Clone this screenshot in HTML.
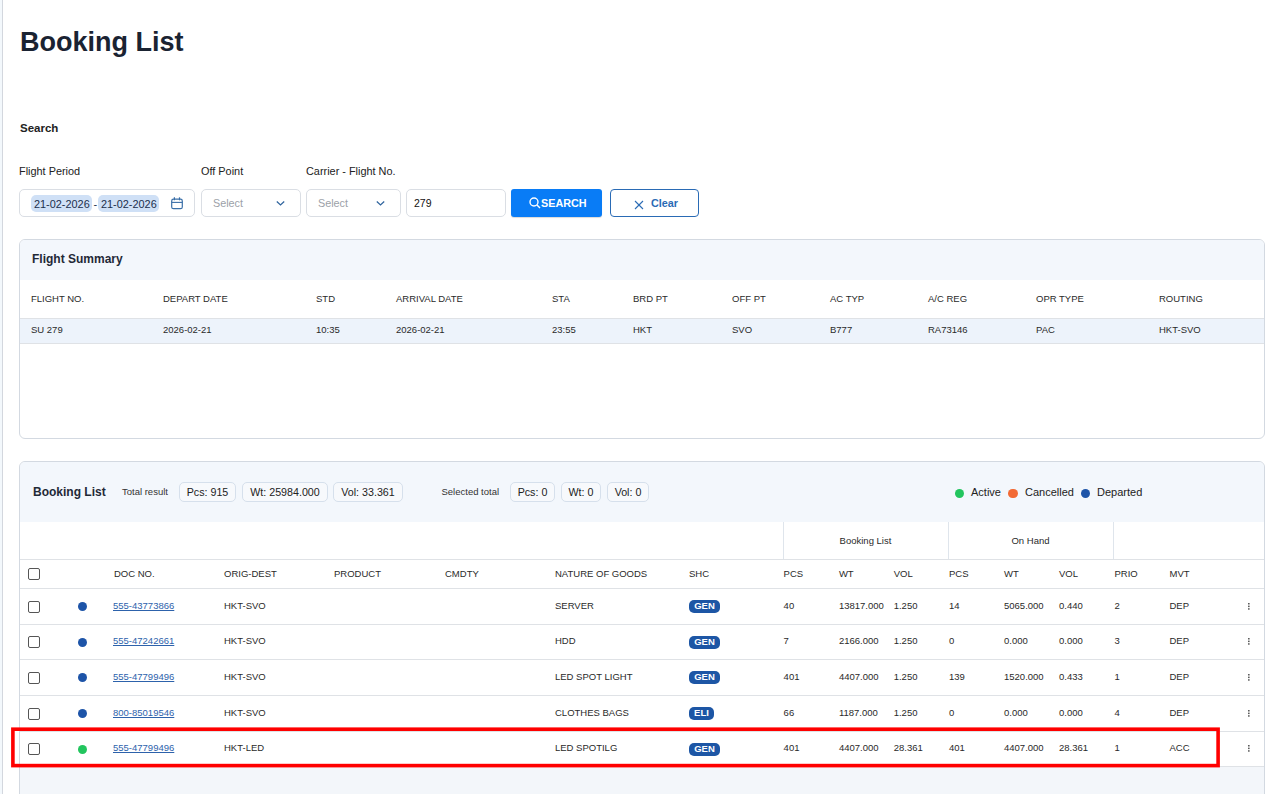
<!DOCTYPE html>
<html><head><meta charset="utf-8">
<style>
*{box-sizing:border-box;margin:0;padding:0}
html,body{width:1270px;height:794px;overflow:hidden;background:#fff;font-family:"Liberation Sans",sans-serif;color:#1f2937}
.a{position:absolute;white-space:nowrap}
#lstrip{position:absolute;left:0;top:0;width:2px;height:794px;background:#f3f8fc}
#lborder{position:absolute;left:2px;top:0;width:1px;height:794px;background:#d3d7de}
h1{position:absolute;left:20px;top:27px;font-size:27px;font-weight:bold;color:#1a2332;letter-spacing:0}
.lbl{font-size:10.9px;color:#222}
.inp{position:absolute;top:189px;height:28px;border:1px solid #dadee4;border-radius:5px;background:#fff}
.chip{position:absolute;top:195px;height:17px;background:#cfe0f6;border-radius:5px}
.dt{font-size:10.9px;color:#1b2f4d}
.sel{font-size:10.8px;color:#9ca1a8}
.card{position:absolute;left:19px;width:1246px;border:1px solid #d3d9e1;border-radius:6px;background:#fff;overflow:hidden}
.chd{position:absolute;left:0;top:0;right:0;background:#f3f7fc}
.th{font-size:9.5px;color:#2a2a2a}
.td{font-size:9.5px;color:#2a2a2a}
.hl{position:absolute;height:1px;background:#dfe2e6}
.vl{position:absolute;width:1px;background:#dfe5ec}
.pill{position:absolute;top:482px;height:20px;border:1px solid #d6e0ec;border-radius:5px;background:#f7f9fc;font-size:10.7px;color:#222;text-align:center;line-height:18px}
.dot{position:absolute;width:9.5px;height:9.5px;border-radius:50%}
.cb{position:absolute;left:28px;width:12px;height:12px;border:1.5px solid #555;border-radius:2px;background:#fff}
.lnk{font-size:9.5px;color:#2d62ab;text-decoration:underline}
.badge{position:absolute;height:13px;border-radius:5px;background:#1d56a5;color:#fff;font-size:9.5px;font-weight:bold;text-align:center;line-height:11.4px}
.keb{position:absolute;left:1247.6px;width:2px;height:7px}
</style></head><body>
<div id="lstrip"></div><div id="lborder"></div>
<h1>Booking List</h1>
<div class="a" style="left:20px;top:122px;font-size:11.5px;font-weight:bold;color:#222">Search</div>

<div class="a lbl" style="left:19px;top:165px">Flight Period</div>
<div class="a lbl" style="left:201px;top:165px">Off Point</div>
<div class="a lbl" style="left:306px;top:165px">Carrier - Flight No.</div>

<div class="inp" style="left:19px;width:176px"></div>
<div class="chip" style="left:31px;width:61px"></div>
<div class="chip" style="left:98px;width:61px"></div>
<div class="a dt" style="left:34px;top:198px">21-02-2026</div>
<div class="a dt" style="left:93.5px;top:198px">-</div>
<div class="a dt" style="left:101px;top:198px">21-02-2026</div>
<svg class="a" style="left:170px;top:197px" width="14" height="14" viewBox="0 0 14 14"><rect x="1.7" y="2.1" width="10.6" height="9.6" rx="1.8" fill="none" stroke="#3a6fa8" stroke-width="1.2"/><line x1="1.7" y1="5.4" x2="12.3" y2="5.4" stroke="#3a6fa8" stroke-width="1.1"/><line x1="4.4" y1="0.3" x2="4.4" y2="3.3" stroke="#3a6fa8" stroke-width="1.2"/><line x1="9.5" y1="0.3" x2="9.5" y2="3.3" stroke="#3a6fa8" stroke-width="1.2"/></svg>

<div class="inp" style="left:201px;width:100px"></div>
<div class="a sel" style="left:213px;top:197px">Select</div>
<svg class="a" style="left:276px;top:200px" width="9" height="7" viewBox="0 0 9 7"><polyline points="0.8,1.5 4.5,5 8.2,1.5" fill="none" stroke="#30659e" stroke-width="1.25"/></svg>

<div class="inp" style="left:306px;width:95px"></div>
<div class="a sel" style="left:318px;top:197px">Select</div>
<svg class="a" style="left:376px;top:200px" width="9" height="7" viewBox="0 0 9 7"><polyline points="0.8,1.5 4.5,5 8.2,1.5" fill="none" stroke="#30659e" stroke-width="1.25"/></svg>

<div class="inp" style="left:406px;width:100px"></div>
<div class="a" style="left:414px;top:197px;font-size:10.5px;color:#111">279</div>

<div class="a" style="left:511px;top:189px;width:91px;height:28px;background:#097cf6;border-radius:3px;box-shadow:0 1px 1px rgba(0,0,0,.15)"></div>
<svg class="a" style="left:529px;top:197px" width="12" height="12" viewBox="0 0 12 12"><circle cx="5" cy="5" r="4" fill="none" stroke="#fff" stroke-width="1.4"/><line x1="8" y1="8" x2="11" y2="11" stroke="#fff" stroke-width="1.4"/></svg>
<div class="a" style="left:541px;top:197px;font-size:10.8px;font-weight:bold;color:#fff">SEARCH</div>

<div class="a" style="left:610px;top:189px;width:89px;height:28px;border:1px solid #2a6bb5;border-radius:4px;background:#fff"></div>
<svg class="a" style="left:634px;top:199.5px" width="10" height="10" viewBox="0 0 10 10"><line x1="1" y1="1" x2="9" y2="9" stroke="#2a6bb5" stroke-width="1.1"/><line x1="9" y1="1" x2="1" y2="9" stroke="#2a6bb5" stroke-width="1.1"/></svg>
<div class="a" style="left:651px;top:197px;font-size:10.8px;font-weight:bold;color:#2a6bb5">Clear</div>

<!-- Flight summary -->
<div class="card" style="top:239px;height:200px">
  <div class="chd" style="height:40px"></div>
</div>
<div class="a" style="left:32px;top:252px;font-size:12px;font-weight:bold;color:#1f2937">Flight Summary</div>
<div class="a" style="left:20px;top:318px;width:1244px;height:25px;background:#edf3fb"></div>
<div class="hl" style="left:20px;top:318px;width:1244px"></div>
<div class="hl" style="left:20px;top:343px;width:1244px"></div>
<div class="a th" style="left:31px;top:293.3px">FLIGHT NO.</div>
<div class="a th" style="left:163px;top:293.3px">DEPART DATE</div>
<div class="a th" style="left:316px;top:293.3px">STD</div>
<div class="a th" style="left:396px;top:293.3px">ARRIVAL DATE</div>
<div class="a th" style="left:552px;top:293.3px">STA</div>
<div class="a th" style="left:633px;top:293.3px">BRD PT</div>
<div class="a th" style="left:732px;top:293.3px">OFF PT</div>
<div class="a th" style="left:830px;top:293.3px">AC TYP</div>
<div class="a th" style="left:928px;top:293.3px">A/C REG</div>
<div class="a th" style="left:1036px;top:293.3px">OPR TYPE</div>
<div class="a th" style="left:1159px;top:293.3px">ROUTING</div>
<div class="a td" style="left:31px;top:324px">SU 279</div>
<div class="a td" style="left:163px;top:324px">2026-02-21</div>
<div class="a td" style="left:316px;top:324px">10:35</div>
<div class="a td" style="left:396px;top:324px">2026-02-21</div>
<div class="a td" style="left:552px;top:324px">23:55</div>
<div class="a td" style="left:633px;top:324px">HKT</div>
<div class="a td" style="left:732px;top:324px">SVO</div>
<div class="a td" style="left:830px;top:324px">B777</div>
<div class="a td" style="left:928px;top:324px">RA73146</div>
<div class="a td" style="left:1036px;top:324px">PAC</div>
<div class="a td" style="left:1159px;top:324px">HKT-SVO</div>

<!-- Booking list -->
<div class="card" style="top:461px;height:340px;background:#f3f6fa">
  <div class="chd" style="height:60px"></div>
  <div style="position:absolute;left:0;top:60px;right:0;height:245px;background:#fff"></div>
</div>
<div class="a" style="left:33px;top:484.7px;font-size:12px;font-weight:bold;color:#1f2937">Booking List</div>
<div class="a" style="left:122px;top:486.2px;font-size:9.5px;color:#333">Total result</div>
<div class="pill" style="left:179px;width:57px">Pcs: 915</div>
<div class="pill" style="left:242px;width:86px">Wt: 25984.000</div>
<div class="pill" style="left:333px;width:70px">Vol: 33.361</div>
<div class="a" style="left:441.5px;top:486.2px;font-size:9.5px;color:#333">Selected total</div>
<div class="pill" style="left:510px;width:45px">Pcs: 0</div>
<div class="pill" style="left:561px;width:40px">Wt: 0</div>
<div class="pill" style="left:607px;width:42px">Vol: 0</div>
<div class="dot" style="left:954.6px;top:488.7px;width:9px;height:9px;background:#22c55e"></div>
<div class="a" style="left:971px;top:486px;font-size:11px;color:#222">Active</div>
<div class="dot" style="left:1008px;top:488.7px;width:9.5px;height:9.5px;background:#f26a35"></div>
<div class="a" style="left:1025px;top:486px;font-size:11px;color:#222">Cancelled</div>
<div class="dot" style="left:1080.7px;top:488.7px;width:9px;height:9px;background:#1d54a8"></div>
<div class="a" style="left:1097px;top:486px;font-size:11px;color:#222">Departed</div>
<div class="hl" style="left:20px;top:559px;width:1244px"></div>
<div class="hl" style="left:20px;top:588px;width:1244px"></div>
<div class="vl" style="left:783px;top:522px;height:37px"></div>
<div class="vl" style="left:948px;top:522px;height:37px"></div>
<div class="vl" style="left:1113px;top:522px;height:37px"></div>
<div class="a th" style="left:783px;width:165px;top:535px;text-align:center">Booking List</div>
<div class="a th" style="left:948px;width:165px;top:535px;text-align:center">On Hand</div>
<div class="cb" style="top:568px"></div>
<div class="a th" style="left:114px;top:568.3px">DOC NO.</div>
<div class="a th" style="left:224px;top:568.3px">ORIG-DEST</div>
<div class="a th" style="left:334px;top:568.3px">PRODUCT</div>
<div class="a th" style="left:445px;top:568.3px">CMDTY</div>
<div class="a th" style="left:555px;top:568.3px">NATURE OF GOODS</div>
<div class="a th" style="left:689px;top:568.3px">SHC</div>
<div class="a th" style="left:783.6px;top:568.3px">PCS</div>
<div class="a th" style="left:838.9px;top:568.3px">WT</div>
<div class="a th" style="left:893.7px;top:568.3px">VOL</div>
<div class="a th" style="left:949px;top:568.3px">PCS</div>
<div class="a th" style="left:1004px;top:568.3px">WT</div>
<div class="a th" style="left:1059px;top:568.3px">VOL</div>
<div class="a th" style="left:1114.5px;top:568.3px">PRIO</div>
<div class="a th" style="left:1169.5px;top:568.3px">MVT</div>
<div class="hl" style="left:20px;top:624px;width:1244px"></div>
<div class="cb" style="top:600.5px"></div>
<div class="dot" style="left:78px;top:602.0px;width:9px;height:9px;background:#1d54a8"></div>
<div class="a lnk" style="left:113px;top:600.0px">555-43773866</div>
<div class="a td" style="left:224px;top:600.0px">HKT-SVO</div>
<div class="a td" style="left:555px;top:600.0px">SERVER</div>
<div class="badge" style="left:689px;top:600.0px;width:31px">GEN</div>
<div class="a td" style="left:783.6px;top:600.0px">40</div>
<div class="a td" style="left:838.9px;top:600.0px">13817.000</div>
<div class="a td" style="left:893.7px;top:600.0px">1.250</div>
<div class="a td" style="left:949px;top:600.0px">14</div>
<div class="a td" style="left:1004px;top:600.0px">5065.000</div>
<div class="a td" style="left:1059px;top:600.0px">0.440</div>
<div class="a td" style="left:1114.5px;top:600.0px">2</div>
<div class="a td" style="left:1169.5px;top:600.0px">DEP</div>
<svg class="keb" style="top:602.7px" width="2" height="7" viewBox="0 0 2 7"><rect x="0.2" y="0" width="1.3" height="1.5" fill="#333"/><rect x="0.2" y="2.6" width="1.3" height="1.5" fill="#333"/><rect x="0.2" y="5.2" width="1.3" height="1.5" fill="#333"/></svg>
<div class="hl" style="left:20px;top:659px;width:1244px"></div>
<div class="cb" style="top:636.0px"></div>
<div class="dot" style="left:78px;top:637.5px;width:9px;height:9px;background:#1d54a8"></div>
<div class="a lnk" style="left:113px;top:635.0px">555-47242661</div>
<div class="a td" style="left:224px;top:635.0px">HKT-SVO</div>
<div class="a td" style="left:555px;top:635.0px">HDD</div>
<div class="badge" style="left:689px;top:635.5px;width:31px">GEN</div>
<div class="a td" style="left:783.6px;top:635.0px">7</div>
<div class="a td" style="left:838.9px;top:635.0px">2166.000</div>
<div class="a td" style="left:893.7px;top:635.0px">1.250</div>
<div class="a td" style="left:949px;top:635.0px">0</div>
<div class="a td" style="left:1004px;top:635.0px">0.000</div>
<div class="a td" style="left:1059px;top:635.0px">0.000</div>
<div class="a td" style="left:1114.5px;top:635.0px">3</div>
<div class="a td" style="left:1169.5px;top:635.0px">DEP</div>
<svg class="keb" style="top:638.2px" width="2" height="7" viewBox="0 0 2 7"><rect x="0.2" y="0" width="1.3" height="1.5" fill="#333"/><rect x="0.2" y="2.6" width="1.3" height="1.5" fill="#333"/><rect x="0.2" y="5.2" width="1.3" height="1.5" fill="#333"/></svg>
<div class="hl" style="left:20px;top:695px;width:1244px"></div>
<div class="cb" style="top:671.5px"></div>
<div class="dot" style="left:78px;top:673.0px;width:9px;height:9px;background:#1d54a8"></div>
<div class="a lnk" style="left:113px;top:671.0px">555-47799496</div>
<div class="a td" style="left:224px;top:671.0px">HKT-SVO</div>
<div class="a td" style="left:555px;top:671.0px">LED SPOT LIGHT</div>
<div class="badge" style="left:689px;top:671.0px;width:31px">GEN</div>
<div class="a td" style="left:783.6px;top:671.0px">401</div>
<div class="a td" style="left:838.9px;top:671.0px">4407.000</div>
<div class="a td" style="left:893.7px;top:671.0px">1.250</div>
<div class="a td" style="left:949px;top:671.0px">139</div>
<div class="a td" style="left:1004px;top:671.0px">1520.000</div>
<div class="a td" style="left:1059px;top:671.0px">0.433</div>
<div class="a td" style="left:1114.5px;top:671.0px">1</div>
<div class="a td" style="left:1169.5px;top:671.0px">DEP</div>
<svg class="keb" style="top:673.7px" width="2" height="7" viewBox="0 0 2 7"><rect x="0.2" y="0" width="1.3" height="1.5" fill="#333"/><rect x="0.2" y="2.6" width="1.3" height="1.5" fill="#333"/><rect x="0.2" y="5.2" width="1.3" height="1.5" fill="#333"/></svg>
<div class="hl" style="left:20px;top:731px;width:1244px"></div>
<div class="cb" style="top:707.5px"></div>
<div class="dot" style="left:78px;top:709.0px;width:9px;height:9px;background:#1d54a8"></div>
<div class="a lnk" style="left:113px;top:707.0px">800-85019546</div>
<div class="a td" style="left:224px;top:707.0px">HKT-SVO</div>
<div class="a td" style="left:555px;top:707.0px">CLOTHES BAGS</div>
<div class="badge" style="left:689px;top:707.0px;width:25px">ELI</div>
<div class="a td" style="left:783.6px;top:707.0px">66</div>
<div class="a td" style="left:838.9px;top:707.0px">1187.000</div>
<div class="a td" style="left:893.7px;top:707.0px">1.250</div>
<div class="a td" style="left:949px;top:707.0px">0</div>
<div class="a td" style="left:1004px;top:707.0px">0.000</div>
<div class="a td" style="left:1059px;top:707.0px">0.000</div>
<div class="a td" style="left:1114.5px;top:707.0px">4</div>
<div class="a td" style="left:1169.5px;top:707.0px">DEP</div>
<svg class="keb" style="top:709.7px" width="2" height="7" viewBox="0 0 2 7"><rect x="0.2" y="0" width="1.3" height="1.5" fill="#333"/><rect x="0.2" y="2.6" width="1.3" height="1.5" fill="#333"/><rect x="0.2" y="5.2" width="1.3" height="1.5" fill="#333"/></svg>
<div class="hl" style="left:20px;top:766px;width:1244px"></div>
<div class="cb" style="top:743.0px"></div>
<div class="dot" style="left:78px;top:744.5px;width:9px;height:9px;background:#22c55e"></div>
<div class="a lnk" style="left:113px;top:742.0px">555-47799496</div>
<div class="a td" style="left:224px;top:742.0px">HKT-LED</div>
<div class="a td" style="left:555px;top:742.0px">LED SPOTILG</div>
<div class="badge" style="left:689px;top:742.5px;width:31px">GEN</div>
<div class="a td" style="left:783.6px;top:742.0px">401</div>
<div class="a td" style="left:838.9px;top:742.0px">4407.000</div>
<div class="a td" style="left:893.7px;top:742.0px">28.361</div>
<div class="a td" style="left:949px;top:742.0px">401</div>
<div class="a td" style="left:1004px;top:742.0px">4407.000</div>
<div class="a td" style="left:1059px;top:742.0px">28.361</div>
<div class="a td" style="left:1114.5px;top:742.0px">1</div>
<div class="a td" style="left:1169.5px;top:742.0px">ACC</div>
<svg class="keb" style="top:745.2px" width="2" height="7" viewBox="0 0 2 7"><rect x="0.2" y="0" width="1.3" height="1.5" fill="#333"/><rect x="0.2" y="2.6" width="1.3" height="1.5" fill="#333"/><rect x="0.2" y="5.2" width="1.3" height="1.5" fill="#333"/></svg>

<svg class="a" style="left:10px;top:726px" width="1212" height="44" viewBox="0 0 1212 44"><rect x="2.9" y="3.2" width="1205.2" height="36.4" fill="none" stroke="#f00" stroke-width="3.6"/></svg>
</body></html>
